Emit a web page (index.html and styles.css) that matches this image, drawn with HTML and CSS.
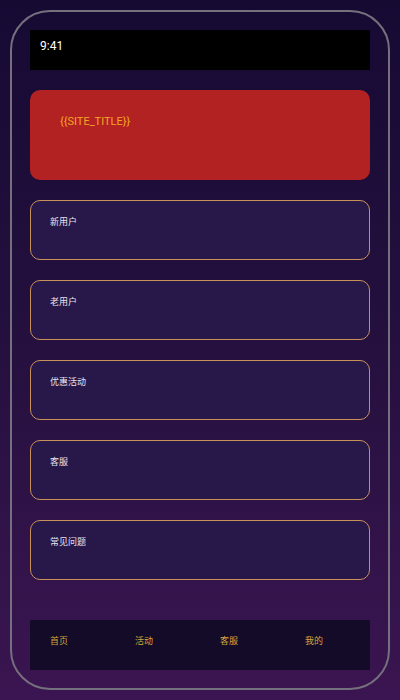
FILE: index.html
```html
<!DOCTYPE html>
<html lang="zh-CN">
<head>
    <meta charset="UTF-8">
    <meta name="viewport" content="width=device-width, initial-scale=1.0">
    <title>{{SITE_TITLE}}</title>
    <link rel="stylesheet" href="styles.css">
</head>
<body>
    <div class="phone">
        <div class="status-bar">9:41</div>

        <div class="hero">
            <div class="hero-title">{{SITE_TITLE}}</div>
        </div>

        <div class="menu">
            <div class="menu-item">新用户</div>
            <div class="menu-item">老用户</div>
            <div class="menu-item">优惠活动</div>
            <div class="menu-item">客服</div>
            <div class="menu-item">常见问题</div>
        </div>

        <div class="tab-bar">
            <div class="tab">首页</div>
            <div class="tab">活动</div>
            <div class="tab">客服</div>
            <div class="tab">我的</div>
        </div>
    </div>
</body>
</html>
```

FILE: styles.css
```css
body {
    margin: 0;
    height: 700px;
    font-family: Roboto, "Noto Sans CJK SC", sans-serif;
    background: linear-gradient(180deg, #160a33 0%, #25103f 50%, #3b1551 100%);
}
.phone {
    box-sizing: border-box;
    height: 680px;
    margin: 10px;
    padding: 18px;
    border: 2px solid #75707d;
    border-radius: 40px;
    display: flex;
    flex-direction: column;
}
.status-bar {
    height: 40px;
    box-sizing: border-box;
    padding: 10px 10px;
    background-color: #000;
    color: #fff;
    font-size: 12px;
    line-height: 12px;
}
.hero {
    height: 90px;
    box-sizing: border-box;
    margin-top: 20px;
    padding: 25px 30px;
    background-color: #b22222;
    border-radius: 10px;
}
.hero-title {
    color: #f5a623;
    font-size: 11px;
    line-height: 14px;
}
.menu {
    margin-top: 20px;
    display: flex;
    flex-direction: column;
    gap: 20px;
}
.menu-item {
    height: 60px;
    box-sizing: border-box;
    padding: 15px 19px;
    background-color: #271849;
    border: 1px solid #c8915a;
    border-radius: 10px;
    color: #e8e4f0;
    font-size: 9px;
    line-height: 12px;
}
.tab-bar {
    margin-top: 40px;
    height: 50px;
    background-color: #130b27;
    display: grid;
    grid-template-columns: repeat(4, 1fr);
}
.tab {
    padding: 15px 20px;
    color: #d4a53c;
    font-size: 9px;
    line-height: 12px;
}
```
